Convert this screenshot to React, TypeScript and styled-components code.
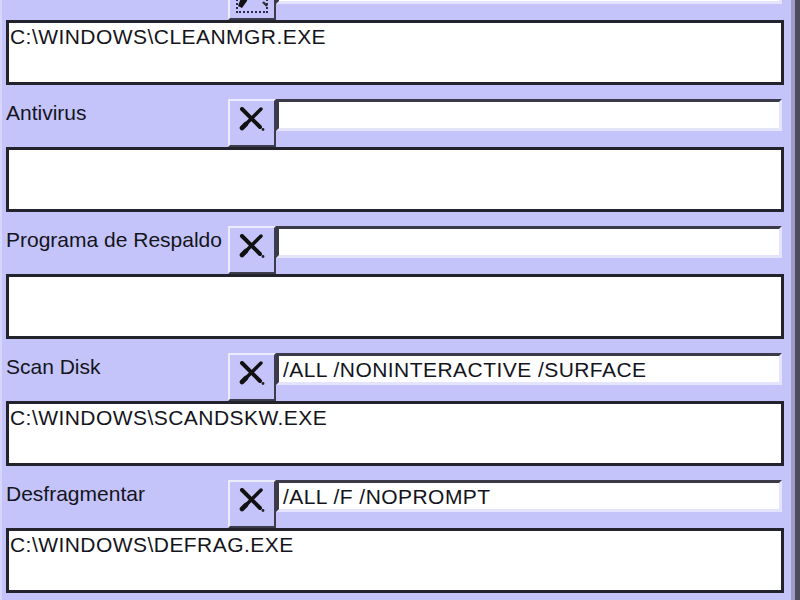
import React from 'react'
import styled, { createGlobalStyle } from 'styled-components'

const Global = createGlobalStyle`
  html, body {
    margin: 0;
    padding: 0;
    background: #c4c4fa;
  }
`

const Window = styled.div`
  box-sizing: border-box;
  width: 800px;
  height: 600px;
  overflow: hidden;
  background: #c4c4fa;
  border-left: 2px solid #d6d6ff;
  border-right: 5px solid #4c4c5c;
  box-shadow: inset -4px 0 0 #9c9cc6;
  padding-left: 4px;
  font-family: 'Liberation Sans', Arial, sans-serif;
  font-size: 21px;
  color: #14141c;
`

// the list is scrolled a bit, so the first entry is cut off at the top
const List = styled.div`
  display: flex;
  flex-direction: column;
  gap: 14px;
  margin-top: -28px;
`

const Group = styled.div`
  display: flex;
  flex-direction: column;
`

const Header = styled.div`
  display: grid;
  grid-template-columns: 222px 48px 506px;
  height: 48px;
`

const Label = styled.div`
  padding-top: 2px;
  white-space: nowrap;
`

const IconButton = styled.button<{ $focused?: boolean }>`
  box-sizing: border-box;
  position: relative;
  width: 48px;
  height: 48px;
  margin: 0;
  background: #c4c4fa;
  border: 2px solid;
  border-color: #ececff #3c3c4c #3c3c4c #ececff;
  display: flex;
  align-items: flex-start;
  justify-content: center;
  padding: ${(p) => (p.$focused ? '0' : '6px 0 0')};
  cursor: default;
  ${(p) =>
    p.$focused &&
    `
    &::after {
      content: '';
      position: absolute;
      left: 6px;
      right: 6px;
      top: 6px;
      bottom: 5px;
      border: 2px dotted #2a2a48;
    }
  `}
`

const ArgsField = styled.input`
  box-sizing: border-box;
  height: 32px;
  width: 506px;
  margin: 0;
  border: 3px solid;
  border-color: #3a3a48 #e4e4ff #e4e4ff #3a3a48;
  background: #fff;
  padding: 1px 4px 0;
  font: inherit;
  letter-spacing: 0.45px;
  color: inherit;
  outline: none;
`

const PathBox = styled.div`
  box-sizing: border-box;
  width: 778px;
  height: 65px;
  border: 3px solid #23232e;
  background: #fff;
  padding: 2px 1px;
  letter-spacing: 0.45px;
  white-space: nowrap;
`

function ClearIcon() {
  return (
    <svg width="26" height="24" viewBox="0 0 26 24">
      <path d="M3 2 L21 20" stroke="#111" strokeWidth="4" strokeLinecap="round" />
      <path d="M22 2 L5 19" stroke="#111" strokeWidth="3.4" strokeLinecap="round" />
      <path d="M3 21 L7 17" stroke="#111" strokeWidth="4.6" strokeLinecap="round" />
      <circle cx="24" cy="22.5" r="1.4" fill="#222" />
    </svg>
  )
}

function BrushIcon() {
  return (
    <svg width="34" height="36" viewBox="0 0 34 36">
      <path d="M6 24 L13 20 L12 27 L7 34 L3 32 Z" fill="#111" />
      <path d="M28 28 L32 32" stroke="#333" strokeWidth="2.4" />
    </svg>
  )
}

type Entry = {
  label: string
  args: string
  path: string
  focused?: boolean
}

const entries: Entry[] = [
  { label: '', args: '', path: 'C:\\WINDOWS\\CLEANMGR.EXE', focused: true },
  { label: 'Antivirus', args: '', path: '' },
  { label: 'Programa de Respaldo', args: '', path: '' },
  { label: 'Scan Disk', args: '/ALL /NONINTERACTIVE /SURFACE', path: 'C:\\WINDOWS\\SCANDSKW.EXE' },
  { label: 'Desfragmentar', args: '/ALL /F /NOPROMPT', path: 'C:\\WINDOWS\\DEFRAG.EXE' },
]

export default function App() {
  return (
    <>
      <Global />
      <Window>
        <List>
          {entries.map((e, i) => (
            <Group key={i}>
              <Header>
                <Label>{e.label}</Label>
                <IconButton $focused={e.focused}>
                  {e.focused ? <BrushIcon /> : <ClearIcon />}
                </IconButton>
                <ArgsField readOnly value={e.args} />
              </Header>
              <PathBox>{e.path}</PathBox>
            </Group>
          ))}
        </List>
      </Window>
    </>
  )
}
